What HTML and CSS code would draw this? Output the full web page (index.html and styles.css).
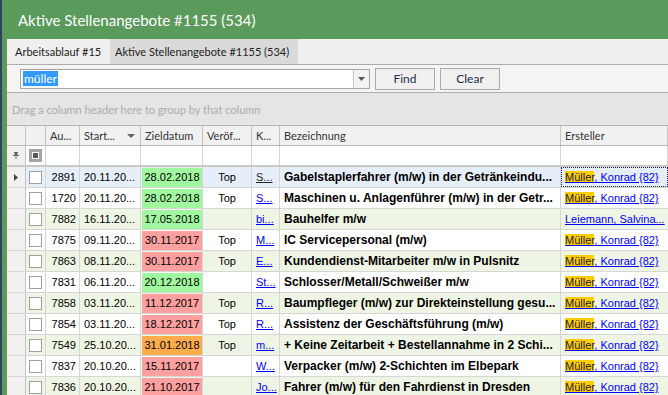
FILE: index.html
```html
<!DOCTYPE html>
<html lang="de">
<head>
  <meta charset="utf-8">
  <title>Aktive Stellenangebote #1155 (534)</title>
  <link rel="stylesheet" href="styles.css">
</head>
<body>

  <header class="titlebar">Aktive Stellenangebote #1155 (534)</header>

  <div class="frame">

    <nav class="tabs">
      <div class="tab">Arbeitsablauf #15</div>
      <div class="tab active">Aktive Stellenangebote #1155 (534)</div>
    </nav>

    <div class="search">
      <div class="combo">
        <div class="combo-text"><span class="sel">müller</span></div>
        <div class="combo-btn">
          <svg width="7" height="4" viewBox="0 0 7 4"><path d="M0 0h7L3.5 4z" fill="#555"/></svg>
        </div>
      </div>
      <button class="btn">Find</button>
      <button class="btn">Clear</button>
    </div>

    <div class="groupbar">Drag a column header here to group by that column</div>

    <div class="grid">
      <div class="row head">
        <span class="c ind"></span>
        <span class="c"></span>
        <span class="c">Au...</span>
        <span class="c sort">Start...
          <svg width="8" height="4" viewBox="0 0 8 4"><path d="M0 0h8L4 4z" fill="#666"/></svg>
        </span>
        <span class="c">Zieldatum</span>
        <span class="c">Veröf...</span>
        <span class="c">K...</span>
        <span class="c">Bezeichnung</span>
        <span class="c">Ersteller</span>
      </div>

      <div class="row filter">
        <span class="c ind">
          <svg width="6" height="7" viewBox="0 0 6 7"><path d="M1 0h4v1H4.5v2H6v1H0V3h1.5V1H1z M2.5 4h1v3h-1z" fill="#666"/></svg>
        </span>
        <span class="c chk"><span class="box mixed"></span></span>
        <span class="c"></span><span class="c"></span><span class="c"></span>
        <span class="c"></span><span class="c"></span><span class="c"></span><span class="c"></span>
      </div>

      <div class="row focus">
        <span class="c ind">
          <svg width="4" height="7" viewBox="0 0 4 7"><path d="M0 0l4 3.5L0 7z" fill="#444"/></svg>
        </span>
        <span class="c chk"><span class="box"></span></span>
        <span class="c num">2891</span>
        <span class="c">20.11.20...</span>
        <span class="c date"><span class="green">28.02.2018</span></span>
        <span class="c mid">Top</span>
        <span class="c"><a class="link dark">S...</a></span>
        <span class="c title">Gabelstaplerfahrer (m/w) in der Getränkeindu...</span>
        <span class="c owner focused"><a class="link"><mark>Müller</mark>, Konrad {82}</a></span>
      </div>

      <div class="row">
        <span class="c ind"></span>
        <span class="c chk"><span class="box"></span></span>
        <span class="c num">1720</span>
        <span class="c">20.11.20...</span>
        <span class="c date"><span class="green">28.02.2018</span></span>
        <span class="c mid">Top</span>
        <span class="c"><a class="link">S...</a></span>
        <span class="c title">Maschinen u. Anlagenführer (m/w) in der Getr...</span>
        <span class="c owner"><a class="link"><mark>Müller</mark>, Konrad {82}</a></span>
      </div>

      <div class="row alt">
        <span class="c ind"></span>
        <span class="c chk"><span class="box"></span></span>
        <span class="c num">7882</span>
        <span class="c">16.11.20...</span>
        <span class="c date"><span class="green">17.05.2018</span></span>
        <span class="c mid"></span>
        <span class="c"><a class="link">bi...</a></span>
        <span class="c title">Bauhelfer m/w</span>
        <span class="c owner"><a class="link">Leiemann, Salvina...</a></span>
      </div>

      <div class="row">
        <span class="c ind"></span>
        <span class="c chk"><span class="box"></span></span>
        <span class="c num">7875</span>
        <span class="c">09.11.20...</span>
        <span class="c date"><span class="red">30.11.2017</span></span>
        <span class="c mid">Top</span>
        <span class="c"><a class="link">M...</a></span>
        <span class="c title">IC Servicepersonal (m/w)</span>
        <span class="c owner"><a class="link"><mark>Müller</mark>, Konrad {82}</a></span>
      </div>

      <div class="row alt">
        <span class="c ind"></span>
        <span class="c chk"><span class="box"></span></span>
        <span class="c num">7863</span>
        <span class="c">08.11.20...</span>
        <span class="c date"><span class="red">30.11.2017</span></span>
        <span class="c mid">Top</span>
        <span class="c"><a class="link">E...</a></span>
        <span class="c title">Kundendienst-Mitarbeiter m/w in Pulsnitz</span>
        <span class="c owner"><a class="link"><mark>Müller</mark>, Konrad {82}</a></span>
      </div>

      <div class="row">
        <span class="c ind"></span>
        <span class="c chk"><span class="box"></span></span>
        <span class="c num">7831</span>
        <span class="c">06.11.20...</span>
        <span class="c date"><span class="green">20.12.2018</span></span>
        <span class="c mid"></span>
        <span class="c"><a class="link">St...</a></span>
        <span class="c title">Schlosser/Metall/Schweißer m/w</span>
        <span class="c owner"><a class="link"><mark>Müller</mark>, Konrad {82}</a></span>
      </div>

      <div class="row alt">
        <span class="c ind"></span>
        <span class="c chk"><span class="box"></span></span>
        <span class="c num">7858</span>
        <span class="c">03.11.20...</span>
        <span class="c date"><span class="red">11.12.2017</span></span>
        <span class="c mid">Top</span>
        <span class="c"><a class="link">R...</a></span>
        <span class="c title">Baumpfleger (m/w) zur Direkteinstellung gesu...</span>
        <span class="c owner"><a class="link"><mark>Müller</mark>, Konrad {82}</a></span>
      </div>

      <div class="row">
        <span class="c ind"></span>
        <span class="c chk"><span class="box"></span></span>
        <span class="c num">7854</span>
        <span class="c">03.11.20...</span>
        <span class="c date"><span class="red">18.12.2017</span></span>
        <span class="c mid">Top</span>
        <span class="c"><a class="link">R...</a></span>
        <span class="c title">Assistenz der Geschäftsführung (m/w)</span>
        <span class="c owner"><a class="link"><mark>Müller</mark>, Konrad {82}</a></span>
      </div>

      <div class="row alt">
        <span class="c ind"></span>
        <span class="c chk"><span class="box"></span></span>
        <span class="c num">7549</span>
        <span class="c">25.10.20...</span>
        <span class="c date"><span class="orange">31.01.2018</span></span>
        <span class="c mid">Top</span>
        <span class="c"><a class="link">m...</a></span>
        <span class="c title">+ Keine Zeitarbeit + Bestellannahme in 2 Schi...</span>
        <span class="c owner"><a class="link"><mark>Müller</mark>, Konrad {82}</a></span>
      </div>

      <div class="row">
        <span class="c ind"></span>
        <span class="c chk"><span class="box"></span></span>
        <span class="c num">7837</span>
        <span class="c">20.10.20...</span>
        <span class="c date"><span class="red">15.11.2017</span></span>
        <span class="c mid"></span>
        <span class="c"><a class="link">W...</a></span>
        <span class="c title">Verpacker (m/w) 2-Schichten im Elbepark</span>
        <span class="c owner"><a class="link"><mark>Müller</mark>, Konrad {82}</a></span>
      </div>

      <div class="row alt">
        <span class="c ind"></span>
        <span class="c chk"><span class="box"></span></span>
        <span class="c num">7836</span>
        <span class="c">20.10.20...</span>
        <span class="c date"><span class="red">21.10.2017</span></span>
        <span class="c mid"></span>
        <span class="c"><a class="link">Jo...</a></span>
        <span class="c title">Fahrer (m/w) für den Fahrdienst in Dresden</span>
        <span class="c owner"><a class="link"><mark>Müller</mark>, Konrad {82}</a></span>
      </div>
    </div>

  </div>

</body>
</html>
```

FILE: styles.css
```css
body {
  margin: 0;
  width: 668px;
  height: 395px;
  overflow: hidden;
  border-left: 2px solid #2e4262;
  box-sizing: border-box;
  font-family: Lato, "Noto Sans", sans-serif;
  color: #222;
  background: #5a9a5a;
}

.titlebar {
  height: 39px;
  line-height: 40px;
  padding-left: 16px;
  font-size: 15px;
  color: #fff;
  background: #5a9a5a;
}

.frame {
  margin-left: 5px;
  background: #efefef;
  height: 356px;
  overflow: hidden;
}

/* tabs */
.tabs {
  display: flex;
  height: 25px;
  background: #efefef;
}

.tab {
  line-height: 25px;
  font-size: 11px;
  white-space: nowrap;
  padding-left: 8px;
  width: 95px;
  color: #222;
}

.tab.active {
  width: 183px;
  padding-left: 5px;
  background: #dadada;
}

/* search panel */
.search {
  display: flex;
  align-items: center;
  height: 27px;
  padding-left: 13px;
  background: #f4f4f4;
  border-top: 1px solid #acacac;
  border-bottom: 1px solid #acacac;
}

.combo {
  display: flex;
  width: 350px;
  height: 20px;
  box-sizing: border-box;
  border: 1px solid #a4a4a4;
  background: #fff;
}

.combo-text {
  flex: 1;
  padding: 2px 0 0 2px;
  font-size: 12px;
  line-height: 14px;
}

.sel {
  background: #3399ff;
  color: #fff;
  padding: 0 1px;
}

.combo-btn {
  width: 15px;
  border-left: 1px solid #c6c6c6;
  background: #f3f3f3;
  display: flex;
  align-items: center;
  justify-content: center;
}

.btn {
  width: 60px;
  height: 22px;
  margin-left: 5px;
  border: 1px solid #a9a9a9;
  background: #f0f0f0;
  font-family: Lato, "Noto Sans", sans-serif;
  font-size: 12px;
  color: #1d2c49;
  padding: 0;
}

/* group panel */
.groupbar {
  height: 32px;
  line-height: 34px;
  padding-left: 5px;
  font-size: 11px;
  color: #ababab;
  background: #e5e5e5;
}

/* grid */
.grid {
  border-top: 1px solid #b4b4b4;
  background: #fff;
}

.row {
  display: grid;
  grid-template-columns: 19px 20px 34px 61px 62px 49px 28px 281px 1fr;
  height: 21px;
  box-sizing: border-box;
  border-bottom: 1px solid #d6d6d6;
  font-family: "Liberation Sans", Arial, sans-serif;
  font-size: 11px;
  color: #000;
}

.c {
  display: flex;
  align-items: center;
  padding: 0 4px;
  box-sizing: border-box;
  border-right: 1px solid #d6d6d6;
  white-space: nowrap;
  overflow: hidden;
}

.row.head {
  height: 20px;
  background: #f1f1f1;
  border-bottom-color: #b9b9b9;
  font-family: Lato, "Noto Sans", sans-serif;
  color: #333;
}

.row.head .c {
  border-right-color: #c4c4c4;
}

.sort {
  justify-content: space-between;
  padding-right: 5px;
}

.row.filter {
  border-bottom: 2px solid #c8c8c8;
}

.c.ind {
  background: #f1f1f1;
  border-right-color: #c4c4c4;
  justify-content: center;
  padding: 0;
}

.c.chk {
  justify-content: center;
  padding: 0;
}

.box {
  width: 13px;
  height: 13px;
  box-sizing: border-box;
  border: 1px solid #9f9f9f;
  background: #fff;
}

.box.mixed {
  border-width: 3px;
  border-color: #a4a4a4;
  box-shadow: inset 0 0 0 1px #fff;
  background: #5a5a5a;
}

.row.alt {
  background: #eff5e5;
}

.row.focus {
  background: #e6eef9;
}

.num {
  justify-content: flex-end;
  padding-right: 3px;
}

.mid {
  justify-content: center;
}

.date {
  padding: 1px 0 0 1px;
  align-items: stretch;
}

.date span {
  flex: 1;
  text-align: center;
  line-height: 18px;
}

.green { background: #a0f7a0; }
.red { background: #ffa0a0; }
.orange { background: #ffad4c; }

.link {
  color: #0000ff;
  text-decoration: underline;
}

.link.dark {
  color: #222;
}

.title {
  font-size: 12px;
  font-weight: bold;
}

.owner {
  border-right: none;
}

.owner mark {
  background: #ffcc00;
  color: #1a1a3a;
}

.owner.focused {
  outline: 1px dotted #1a1a8a;
  outline-offset: -1px;
}
```
